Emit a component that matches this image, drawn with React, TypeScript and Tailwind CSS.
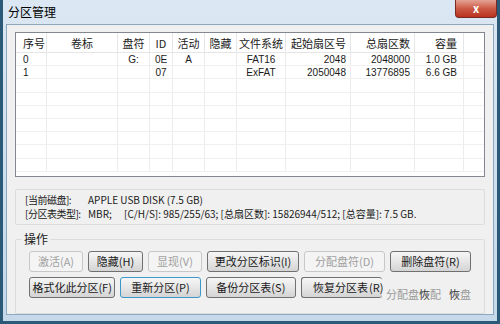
const FONT = { fontFamily: '"Noto Sans CJK SC", "Noto Sans", sans-serif' };
const LATIN = { fontFamily: '"Liberation Sans", Arial, sans-serif' };

const COLS = [
  { label: "序号", w: "w-[31px]", align: "text-left pl-[7px]" },
  { label: "卷标", w: "w-[71px]", align: "text-center" },
  { label: "盘符", w: "w-[32px]", align: "text-center" },
  { label: "ID", w: "w-[23px]", align: "text-center" },
  { label: "活动", w: "w-[32px]", align: "text-center" },
  { label: "隐藏", w: "w-[32px]", align: "text-center" },
  { label: "文件系统", w: "w-[49px]", align: "text-center" },
  { label: "起始扇区号", w: "w-[65px]", align: "text-right pr-[4px]" },
  { label: "总扇区数", w: "w-[64px]", align: "text-right pr-[4px]" },
  { label: "容量", w: "w-[49px]", align: "text-right pr-[6px]" },
];

const ROWS = [
  ["0", "", "G:", "0E", "A", "", "FAT16", "2048", "2048000", "1.0 GB"],
  ["1", "", "", "07", "", "", "ExFAT", "2050048", "13776895", "6.6 GB"],
];

function Btn({ label, disabled, focused, w }: { label: string; disabled?: boolean; focused?: boolean; w: string }) {
  return (
    <div
      className={`${w} h-[21px] flex items-center justify-center rounded-[3px] border text-[11px] whitespace-nowrap ${
        focused ? "border-[#3c98c8]" : disabled ? "border-[#c8c8c8]" : "border-[#707070]"
      } ${disabled ? "text-[#a0a0a0] bg-[#f4f4f4]" : "text-[#1a1a1a] bg-gradient-to-b from-[#f6f6f6] via-[#e6e6e6] to-[#d4d4d4]"}`}
    >
      {label}
    </div>
  );
}

export default function App() {
  return (
    <div style={FONT} className="w-[500px] h-[324px] overflow-hidden bg-[#b9d1e6] relative">
      <div className="h-full w-full border-[3px] border-t-0 border-[#2a5a78] bg-gradient-to-b from-[#dbe7f2] to-[#c5d9ea] flex flex-col">
        <div className="h-[24px] flex items-center pl-[5px] shrink-0">
          <span className="text-[12px] text-black">分区管理</span>
        </div>
        <div className="absolute right-[3px] top-0 w-[42px] h-[18px] rounded-b-[4px] border border-[#7a2a22] border-t-0 bg-gradient-to-b from-[#e3a295] via-[#cc5a45] to-[#b8311d] flex items-center justify-center">
          <span className="text-white text-[11px] font-bold leading-none">x</span>
        </div>
        <div className="flex-1 mx-[3px] mb-[6px] border border-[#8aa8c0] bg-[#f0f0f0] flex flex-col px-[8px] pt-[7px]">
          <div className="h-[145px] border border-[#828790] bg-white shrink-0 overflow-hidden">
            <div className="flex h-[20px] border-b border-[#e5e5e5] text-[11px] text-[#1a1a1a]">
              {COLS.map((c, i) => (
                <div key={i} className={`${c.w} ${c.align} border-r border-[#e5e5e5] leading-[20px]`}>
                  {c.label}
                </div>
              ))}
            </div>
            {Array.from({ length: 9 }).map((_, r) => (
              <div key={r} style={LATIN} className="flex h-[13.2px] border-b border-[#f0f0f0] text-[10px] text-[#1a1a1a]">
                {COLS.map((c, i) => (
                  <div key={i} className={`${c.w} ${c.align} border-r border-[#ececec] leading-[13px]`}>
                    {ROWS[r] ? ROWS[r][i] : ""}
                  </div>
                ))}
              </div>
            ))}
          </div>
          <div className="mt-[12px] h-[36px] border border-[#dcdcdc] rounded-[2px] px-[9px] pt-[3px] text-[10px] text-[#1a1a1a] leading-[14px] whitespace-nowrap">
            <div className="flex">
              <span className="w-[63px] tracking-[-0.5px]">[当前磁盘]:</span>
              <span>APPLE USB DISK (7.5 GB)</span>
            </div>
            <div className="flex">
              <span className="w-[63px] tracking-[-0.5px]">[分区表类型]:</span>
              <span className="w-[36px]">MBR;</span>
              <span>[C/H/S]: 985/255/63; [总扇区数]: 15826944/512; [总容量]: 7.5 GB.</span>
            </div>
          </div>
          <div className="mt-[14px] flex-1 border border-[#dcdcdc] rounded-[2px] relative px-[13px] pt-[11px]">
            <span className="absolute -top-[8px] left-[6px] bg-[#f0f0f0] px-[2px] text-[12px] text-[#1a1a1a] leading-[14px]">操作</span>
            <div className="flex gap-[5px]">
              <Btn label="激活(A)" disabled w="w-[54px]" />
              <Btn label="隐藏(H)" w="w-[55px]" />
              <Btn label="显现(V)" disabled w="w-[54px]" />
              <Btn label="更改分区标识(I)" w="w-[92px]" />
              <Btn label="分配盘符(D)" disabled w="w-[81px]" />
              <Btn label="删除盘符(R)" w="w-[81px]" />
            </div>
            <div className="flex gap-[5px] mt-[5px] items-start">
              <Btn label="格式化此分区(F)" w="w-[88px]" />
              <Btn label="重新分区(P)" focused w="w-[82px]" />
              <Btn label="备份分区表(S)" w="w-[92px]" />
              <div className="w-[81px] h-[21px] rounded-[3px] border border-[#707070] border-r-0 bg-gradient-to-b from-[#f6f6f6] via-[#e6e6e6] to-[#d4d4d4] text-[11px] text-[#1a1a1a] flex items-center pl-[11px] whitespace-nowrap">
                恢复分区表<span className="ml-[1px]">(R)</span>
              </div>
              <div className="flex items-center h-[21px] mt-[7px] -ml-[1px] text-[11px] text-[#9a9a9a] whitespace-nowrap">
                <span>分配盘</span>
                <span className="text-[#333]">恢</span>
                <span>配</span>
                <span className="ml-[8px] text-[#333]">恢</span>
                <span>盘</span>
              </div>
            </div>
          </div>
        </div>
      </div>
    </div>
  );
}
